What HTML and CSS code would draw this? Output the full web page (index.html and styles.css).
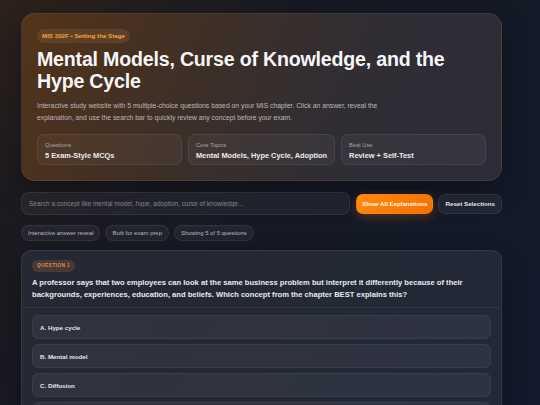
FILE: index.html
```html
<!DOCTYPE html>
<html lang="en">
<head>
<meta charset="utf-8">
<title>Mental Models, Curse of Knowledge, and the Hype Cycle</title>
<link rel="stylesheet" href="styles.css">
</head>
<body>
<main class="page">
  <section class="hero">
    <span class="hero-badge">MIS 302F • Setting the Stage</span>
    <h1 class="hero-title">Mental Models, Curse of Knowledge, and the Hype Cycle</h1>
    <p class="hero-desc">Interactive study website with 5 multiple-choice questions based on your MIS chapter. Click an answer, reveal the explanation, and use the search bar to quickly review any concept before your exam.</p>
    <div class="stats">
      <div class="stat"><div class="stat-label">Questions</div><div class="stat-value">5 Exam-Style MCQs</div></div>
      <div class="stat"><div class="stat-label">Core Topics</div><div class="stat-value">Mental Models, Hype Cycle, Adoption</div></div>
      <div class="stat"><div class="stat-label">Best Use</div><div class="stat-value">Review + Self-Test</div></div>
    </div>
  </section>

  <div class="toolbar">
    <input class="search" type="text" placeholder="Search a concept like mental model, hype, adoption, curse of knowledge...">
    <button class="btn btn-primary">Show All Explanations</button>
    <button class="btn btn-secondary">Reset Selections</button>
  </div>

  <div class="chips">
    <span class="chip">Interactive answer reveal</span>
    <span class="chip">Built for exam prep</span>
    <span class="chip">Showing 5 of 5 questions</span>
  </div>

  <article class="qcard">
    <div class="qhead">
      <span class="qbadge">QUESTION 1</span>
      <p class="qtext">A professor says that two employees can look at the same business problem but interpret it differently because of their backgrounds, experiences, education, and beliefs. Which concept from the chapter BEST explains this?</p>
    </div>
    <div class="options">
      <button class="option">A. Hype cycle</button>
      <button class="option">B. Mental model</button>
      <button class="option">C. Diffusion</button>
      <button class="option">D. Curse of knowledge</button>
    </div>
  </article>
</main>
</body>
</html>
```

FILE: styles.css
```css
* { box-sizing: border-box; }
html, body { margin: 0; padding: 0; }
body {
  font-family: "Liberation Sans", Arial, sans-serif;
  color: #eef0f5;
  height: 405px;
  overflow: hidden;
  background:
    radial-gradient(ellipse 420px 320px at 0% 0%, rgba(120, 70, 20, 0.18), transparent 70%),
    linear-gradient(120deg, #1d1a1d 0%, #171a24 45%, #121a2c 100%);
}
.page {
  width: 481px;
  margin-left: 21px;
  padding-top: 13px;
  display: flex;
  flex-direction: column;
}
.hero {
  border-radius: 14px;
  padding: 15px 15px 15px;
  border: 1px solid rgba(255, 255, 255, 0.07);
  background: linear-gradient(115deg, #523419 0%, #3e2f26 35%, #302d33 65%, #2b2c38 100%);
  box-shadow: 0 10px 30px rgba(0, 0, 0, 0.35);
  display: flex;
  flex-direction: column;
  align-items: flex-start;
}
.hero-badge {
  height: 14px;
  line-height: 14px;
  padding: 0 5px;
  border-radius: 7px;
  background: rgba(255, 170, 90, 0.12);
  color: #f0a24d;
  font-size: 6.2px;
  font-weight: 700;
}
.hero-title {
  margin: 5px 0 0;
  font-size: 19.6px;
  line-height: 22px;
  font-weight: 700;
  letter-spacing: -0.2px;
  color: #f6f6f8;
}
.hero-desc {
  margin: 8px 0 0;
  font-size: 6.8px;
  line-height: 12px;
  color: #b9b8bf;
  max-width: 360px;
}
.stats {
  margin-top: 10px;
  width: 100%;
  display: grid;
  grid-template-columns: repeat(3, 1fr);
  gap: 6px;
}
.stat {
  height: 31px;
  border-radius: 7px;
  padding: 7px 7px 0;
  background: rgba(255, 255, 255, 0.045);
  border: 1px solid rgba(255, 255, 255, 0.07);
}
.stat-label {
  font-size: 5.8px;
  line-height: 7px;
  color: #a8a6ad;
}
.stat-value {
  margin-top: 2px;
  font-size: 7.4px;
  line-height: 9px;
  font-weight: 700;
  color: #eceaee;
  white-space: nowrap;
}
.toolbar {
  margin-top: 11px;
  display: flex;
  align-items: center;
  gap: 5px;
}
.search {
  flex: 1;
  min-width: 0;
  height: 23px;
  border-radius: 8px;
  border: 1px solid rgba(255, 255, 255, 0.07);
  background: rgba(255, 255, 255, 0.05);
  padding: 0 7px;
  font-family: inherit;
  font-size: 6.5px;
  color: #ddd;
  outline: none;
}
.search::placeholder { color: #83858f; }
.btn {
  height: 20px;
  border-radius: 7px;
  font-family: inherit;
  font-size: 6.2px;
  font-weight: 700;
  white-space: nowrap;
  border: 1px solid transparent;
}
.btn-primary {
  margin-left: 1px;
  padding: 0 5px;
  font-size: 6.1px;
  background: linear-gradient(135deg, #ff8a12, #f46f00);
  color: #fff4e6;
  box-shadow: 0 3px 10px rgba(255, 120, 0, 0.25);
}
.btn-secondary {
  padding: 0 6px;
  background: rgba(255, 255, 255, 0.06);
  border-color: rgba(255, 255, 255, 0.07);
  color: #e3e4ea;
}
.chips {
  margin-top: 10px;
  display: flex;
  gap: 5px;
}
.chip {
  height: 16px;
  line-height: 14px;
  padding: 0 6px;
  border-radius: 8px;
  font-size: 5.9px;
  color: #b9bac2;
  background: rgba(255, 255, 255, 0.05);
  border: 1px solid rgba(255, 255, 255, 0.07);
}
.qcard {
  margin-top: 9px;
  border-radius: 10px;
  border: 1px solid rgba(255, 255, 255, 0.08);
  background: linear-gradient(120deg, #262833 0%, #242936 60%, #222838 100%);
  box-shadow: 0 10px 30px rgba(0, 0, 0, 0.3);
}
.qhead {
  padding: 9px 10px 6px;
  border-bottom: 1px solid rgba(255, 255, 255, 0.06);
  display: flex;
  flex-direction: column;
  align-items: flex-start;
}
.qbadge {
  height: 12px;
  line-height: 12px;
  padding: 0 5px;
  border-radius: 6px;
  background: rgba(255, 150, 60, 0.16);
  color: #d6954f;
  font-size: 4.8px;
  font-weight: 700;
  letter-spacing: 0.4px;
}
.qtext {
  margin: 5px 0 0;
  font-size: 7.6px;
  line-height: 12.2px;
  font-weight: 700;
  color: #e9eaf0;
}
.options {
  padding: 7px 10px 10px;
  display: flex;
  flex-direction: column;
  gap: 5px;
}
.option {
  height: 24px;
  text-align: left;
  padding: 0 7px;
  border-radius: 7px;
  border: 1px solid rgba(255, 255, 255, 0.06);
  background: rgba(255, 255, 255, 0.05);
  font-family: inherit;
  font-size: 6.2px;
  font-weight: 700;
  color: #e6e7ee;
}
```
